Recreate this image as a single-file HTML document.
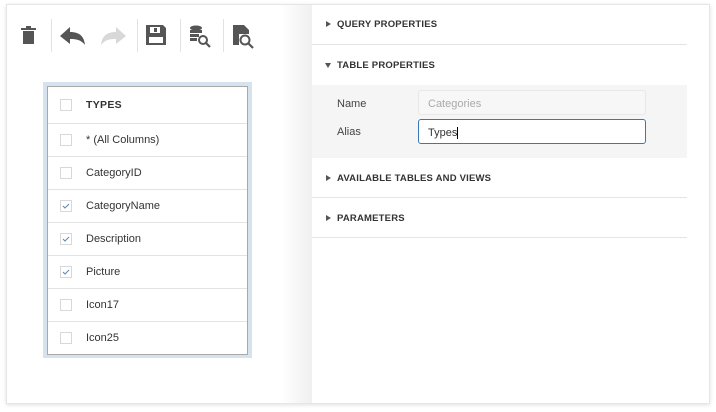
<!DOCTYPE html>
<html><head><style>
*{box-sizing:border-box;margin:0;padding:0}
body{width:716px;height:412px;background:#fff;font-family:"Liberation Sans",sans-serif;position:relative;overflow:hidden}
.frame{position:absolute;left:6px;top:4px;width:704px;height:400px;border:1px solid #e6e6e6;background:#fff;box-shadow:0 1px 4px rgba(0,0,0,.12)}
.sep{position:absolute;top:19px;width:1px;height:33px;background:#e2e2e2}
.shadow{position:absolute;left:280px;top:5px;width:32px;height:398px;background:linear-gradient(to right,rgba(0,0,0,0),rgba(0,0,0,.06))}
.panel{position:absolute;left:312px;top:5px;width:397px;height:398px;background:#fff}
.sec{position:absolute;left:0;width:375px;border-bottom:1px solid #e4e4e4;font-size:9.5px;font-weight:bold;color:#333;letter-spacing:.2px}
.sec span.t{position:absolute;left:25px}
.tri{position:absolute;left:14px;width:0;height:0}
.tr{border-top:3px solid transparent;border-bottom:3px solid transparent;border-left:5px solid #555}
.td{border-left:3px solid transparent;border-right:3px solid transparent;border-top:5px solid #555}
.outer{position:absolute;left:43px;top:82px;width:209px;height:276px;background:#d6e2ee}
.inner{position:absolute;left:47px;top:86px;width:201px;height:269px;border:1px solid #a8a8a8;background:#fff}
.row{position:absolute;left:0;width:199px;height:33px;border-bottom:1px solid #e3e3e3;font-size:11px;color:#333}
.cb{position:absolute;left:12px;top:10px;width:12px;height:12px;border:1px solid #d8d8d8;background:#fff}
.row .l{position:absolute;left:38px;top:10px}
</style></head><body>
<div class="frame"></div>
<div class="shadow"></div>
<svg style="position:absolute;left:0;top:0" width="280" height="60">
<g fill="#555">
<rect x="21" y="28" width="15" height="2"/><rect x="26" y="26" width="5" height="2"/><rect x="23" y="31" width="11" height="13"/>
<path d="M60 36 L70 27 L70 32 C78 32 84 35 85 45 C81 40 77 39 70 39 L70 44 Z"/>
<path fill="#d8d8d8" d="M126 36 L116 27 L116 32 C108 32 102 35 101 45 C105 40 109 39 116 39 L116 44 Z"/>
<path d="M146 25 h17 l3 3 v17 h-20 Z M150 27 v6 h10 v-6 Z M149 37 v6 h14 v-6 Z" fill-rule="evenodd"/>
<rect x="154" y="28" width="3" height="4"/>
<ellipse cx="196" cy="28" rx="6" ry="2.5"/><rect x="190" y="30" width="12" height="3"/><rect x="190" y="34" width="9" height="3"/><rect x="190" y="38" width="7" height="3"/>
<circle cx="203" cy="40" r="4" fill="none" stroke="#555" stroke-width="2"/><path d="M206 43 l4 4" stroke="#555" stroke-width="2.2"/>
<path d="M233 25 h11 l5 5 v4 h-10 v11 h-6 Z"/>
<circle cx="245" cy="40" r="4.5" fill="none" stroke="#555" stroke-width="2"/><path d="M248 43 l5 5" stroke="#555" stroke-width="2.2"/>
</g></svg>
<div class="sep" style="left:51px"></div><div class="sep" style="left:137px"></div><div class="sep" style="left:180px"></div><div class="sep" style="left:223px"></div>
<div class="outer"></div>
<div class="inner">
<div class="row" style="top:0;height:37px"><div class="cb" style="top:12px"></div><span class="l" style="top:12px;font-weight:bold;font-size:10.5px;letter-spacing:.3px">TYPES</span></div>
<div class="row" style="top:37px"><div class="cb"></div><span class="l">* (All Columns)</span></div>
<div class="row" style="top:70px"><div class="cb"></div><span class="l">CategoryID</span></div>
<div class="row" style="top:103px"><div class="cb"><svg width="10" height="10" style="position:absolute;left:0;top:0"><path d="M2 5 L4 7 L8 3" stroke="#5b87b5" stroke-width="1" fill="none"/></svg></div><span class="l">CategoryName</span></div>
<div class="row" style="top:136px"><div class="cb"><svg width="10" height="10" style="position:absolute;left:0;top:0"><path d="M2 5 L4 7 L8 3" stroke="#5b87b5" stroke-width="1" fill="none"/></svg></div><span class="l">Description</span></div>
<div class="row" style="top:169px"><div class="cb"><svg width="10" height="10" style="position:absolute;left:0;top:0"><path d="M2 5 L4 7 L8 3" stroke="#5b87b5" stroke-width="1" fill="none"/></svg></div><span class="l">Picture</span></div>
<div class="row" style="top:202px"><div class="cb"></div><span class="l">Icon17</span></div>
<div class="row" style="top:235px;border-bottom:none"><div class="cb"></div><span class="l">Icon25</span></div>
</div>
<div class="panel">
<div class="sec" style="top:0;height:40px"><div class="tri tr" style="top:16px"></div><span class="t" style="top:14px">QUERY PROPERTIES</span></div>
<div class="sec" style="top:40px;height:113px"><div class="tri td" style="top:18px;left:13px"></div><span class="t" style="top:15px">TABLE PROPERTIES</span>
<div style="position:absolute;left:0;top:40px;width:375px;height:73px;background:#f5f5f5;font-weight:normal;font-size:11px;color:#444;letter-spacing:0">
<span style="position:absolute;left:25px;top:13px">Name</span>
<span style="position:absolute;left:25px;top:41px">Alias</span>
<div style="position:absolute;left:106px;top:5px;width:228px;height:25px;border:1px solid #e8e8e8;border-radius:3px;background:#f7f7f7;color:#aaa;padding:7px 9px">Categories</div>
<div style="position:absolute;left:106px;top:34px;width:228px;height:25px;border:1px solid #3a78b5;border-radius:3px;background:#fff;color:#333;padding:7px 9px">Types<span style="border-left:1px solid #000;margin-left:0"></span></div>
</div></div>
<div class="sec" style="top:153px;height:40px"><div class="tri tr" style="top:17px"></div><span class="t" style="top:15px">AVAILABLE TABLES AND VIEWS</span></div>
<div class="sec" style="top:193px;height:40px"><div class="tri tr" style="top:17px"></div><span class="t" style="top:15px">PARAMETERS</span></div>
</div>
</body></html>
